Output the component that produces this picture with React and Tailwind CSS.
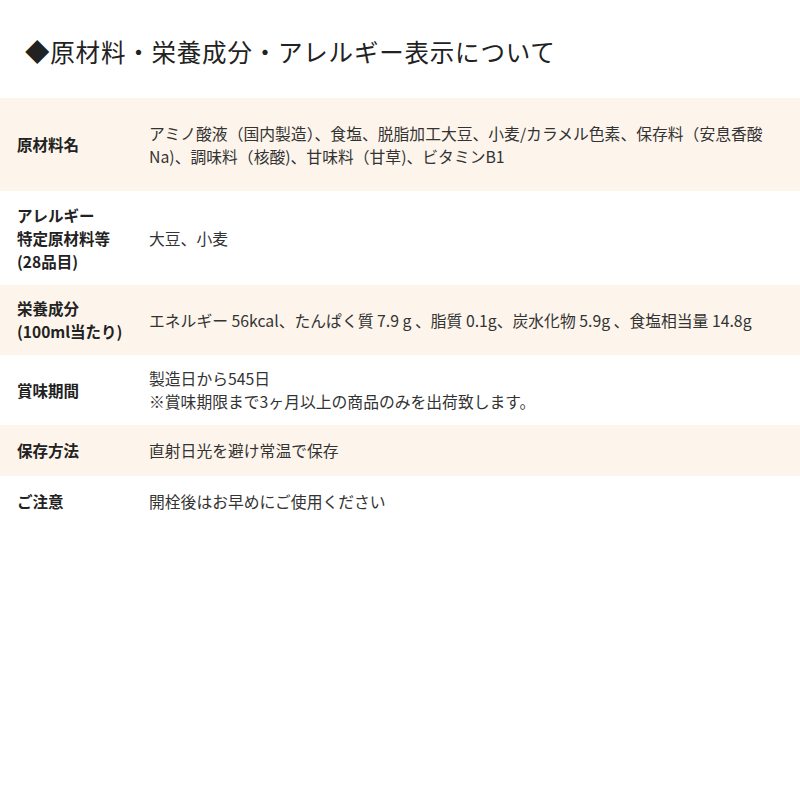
import React from 'react';

const rows = [
    {
        label: ['原材料名'],
        content: ['アミノ酸液（国内製造）、食塩、脱脂加工大豆、小麦/カラメル色素、保存料（安息香酸Na)、調味料（核酸)、甘味料（甘草)、ビタミンB1'],
        bg: true,
        pad: 'py-[23.5px]',
    },
    {
        label: ['アレルギー', '特定原材料等', '(28品目)'],
        content: ['大豆、小麦'],
        bg: false,
        pad: 'py-[12.5px]',
    },
    {
        label: ['栄養成分', '(100ml当たり)'],
        content: ['エネルギー 56kcal、たんぱく質 7.9 g 、脂質 0.1g、炭水化物 5.9g 、食塩相当量 14.8g'],
        bg: true,
        pad: 'py-[12px]',
    },
    {
        label: ['賞味期間'],
        content: ['製造日から545日', '※賞味期限まで3ヶ月以上の商品のみを出荷致します。'],
        bg: false,
        pad: 'py-[12px]',
    },
    {
        label: ['保存方法'],
        content: ['直射日光を避け常温で保存'],
        bg: true,
        pad: 'py-[14px]',
    },
    {
        label: ['ご注意'],
        content: ['開栓後はお早めにご使用ください'],
        bg: false,
        pad: 'py-[14px]',
    },
];

const App = () => {
    return (
        <div className="w-[800px] min-h-[800px] bg-white text-[#222] font-['Noto_Sans_CJK_JP','Noto_Sans',sans-serif]">
            <h1 className="pl-[25px] pt-[36px] pb-[30px] text-[24.5px] leading-[32px] font-normal tracking-[0.8px]">
                ◆原材料・栄養成分・アレルギー表示について
            </h1>

            <div className="flex flex-col">
                {rows.map((r, i) => (
                    <div
                        key={i}
                        className={`flex items-center ${r.pad} ${r.bg ? 'bg-[#fdf5eb]' : 'bg-white'}`}
                    >
                        <div className="w-[149px] shrink-0 pl-[17px] text-[15.5px] leading-[23px] font-bold">
                            {r.label.map((l, j) => (
                                <div key={j}>{l}</div>
                            ))}
                        </div>
                        <div className="flex-1 pr-[14px] text-[15.8px] leading-[23px] text-[#333]">
                            {r.content.map((c, j) => (
                                <div key={j}>{c}</div>
                            ))}
                        </div>
                    </div>
                ))}
            </div>
        </div>
    );
};

export default App;
